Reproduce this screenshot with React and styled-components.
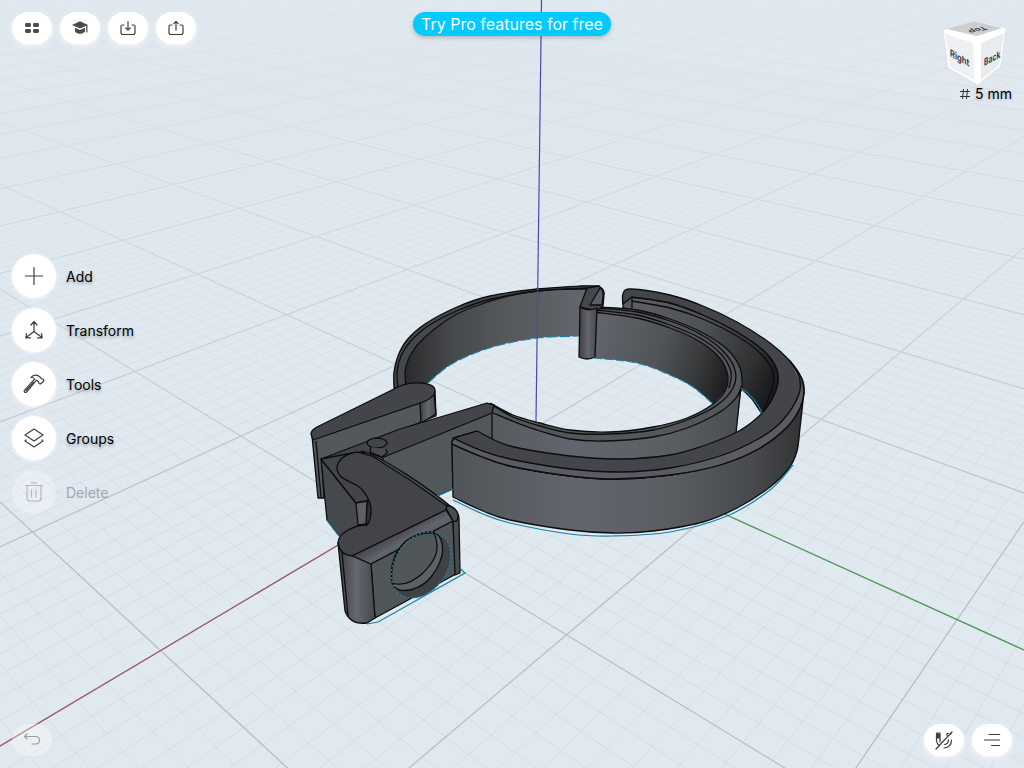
import styled, { createGlobalStyle } from "styled-components";

const tools = [
  { id: "add", label: "Add", Icon: PlusIcon },
  { id: "transform", label: "Transform", Icon: TransformIcon },
  { id: "tools", label: "Tools", Icon: HammerIcon },
  { id: "groups", label: "Groups", Icon: LayersIcon },
  { id: "delete", label: "Delete", Icon: TrashIcon, disabled: true },
];

export default function App() {
  return (
    <>
      <GlobalStyle />
      <Screen>
        <Viewport />
        <Overlay>
          <TopBar>
            <ButtonRow>
              <PillButton aria-label="Designs">
                <GridIcon />
              </PillButton>
              <PillButton aria-label="Learn">
                <CapIcon />
              </PillButton>
              <PillButton aria-label="Import">
                <ImportIcon />
              </PillButton>
              <PillButton aria-label="Export">
                <ExportIcon />
              </PillButton>
            </ButtonRow>
            <PromoButton>Try Pro features for free</PromoButton>
            <ViewInfo>
              <CubeButton aria-label="View orientation">
                <ViewCube />
              </CubeButton>
              <GridSize>
                <HashIcon />5 mm
              </GridSize>
            </ViewInfo>
          </TopBar>
          <ToolList>
            {tools.map(({ id, label, Icon, disabled }) => (
              <li key={id}>
                <ToolButton disabled={disabled}>
                  <ToolCircle $faded={disabled}>
                    <Icon />
                  </ToolCircle>
                  {label}
                </ToolButton>
              </li>
            ))}
          </ToolList>
          <BottomBar>
            <PillButton aria-label="Undo" disabled>
              <UndoIcon />
            </PillButton>
            <ButtonRow>
              <PillButton aria-label="Snapping off">
                <MagnetOffIcon />
              </PillButton>
              <PillButton aria-label="Items">
                <ItemsIcon />
              </PillButton>
            </ButtonRow>
          </BottomBar>
        </Overlay>
      </Screen>
    </>
  );
}

/* ---------- ground grid ---------- */

// perspective projection of the ground plane, one unit = one major cell
function project(u, v) {
  const w = 1 - 0.1433 * u - 0.1294 * v;
  return [
    ((535 - 210.2 * u + 87.2 * v) / w).toFixed(1),
    ((427.7 + 18.2 * u + 15.8 * v) / w).toFixed(1),
  ];
}

function gridPath(from, to, step) {
  const parts = [];
  const count = Math.round((to - from) / step);
  for (let i = 0; i <= count; i++) {
    const n = from + i * step;
    const vMax = (0.7 - 0.1433 * n) / 0.1294;
    const uMax = (0.7 - 0.1294 * n) / 0.1433;
    parts.push(`M${project(n, -60)}L${project(n, vMax)}`);
    parts.push(`M${project(-60, n)}L${project(uMax, n)}`);
  }
  return parts.join("");
}

const majorGrid = gridPath(-24, 8, 1);
const minorGrid = gridPath(-9, 7, 0.1);

/* ---------- model ---------- */

// smooth curve through the points, without the leading command
function curve(points) {
  let d = `${points[0]}`;
  for (let i = 0; i < points.length - 1; i++) {
    const p0 = points[i - 1] || points[i];
    const p1 = points[i];
    const p2 = points[i + 1];
    const p3 = points[i + 2] || p2;
    const c1 = [p1[0] + (p2[0] - p0[0]) / 6, p1[1] + (p2[1] - p0[1]) / 6];
    const c2 = [p2[0] - (p3[0] - p1[0]) / 6, p2[1] - (p3[1] - p1[1]) / 6];
    d += `C${c1} ${c2} ${p2}`;
  }
  return d;
}

const line = (points) => `M${curve(points)}`;
const band = (a, b) => `M${curve(a)}L${curve([...b].reverse())}Z`;

const cuffOuter = [[394, 388], [394, 372], [398, 356], [407, 340], [425, 324], [457, 307], [490, 296], [537, 289], [580, 286], [599, 286]];
const cuffMid = [[398, 388], [397, 372], [401, 356], [410, 342], [428, 326], [459, 310], [491, 299], [538, 291], [588, 288]];
const cuffInner = [[406, 386], [405, 372], [409, 358], [420, 342], [447, 320], [473, 307], [513, 295], [547, 290], [587, 289]];
const cuffBottom = [[428, 383], [447, 367], [470, 355], [500, 345], [537, 338], [579, 336]];

const innerTop = [[597, 307], [637, 310], [670, 319], [703, 333], [728, 350], [740, 368], [742, 386], [739, 395]];
const innerTop2 = [[597, 308], [637, 312], [670, 321], [700, 334], [723, 351], [735, 370], [733, 388], [716, 406], [687, 420], [653, 430], [610, 434], [570, 433], [540, 426], [513, 417], [491, 404]];
const innerHole = [[594, 312], [637, 318], [670, 328], [697, 340], [717, 355], [727, 372], [726, 389], [713, 404], [687, 418], [653, 427], [610, 432], [570, 430], [540, 423], [513, 415], [490, 403]];
const innerRidge = [[597, 310], [637, 315], [670, 325], [700, 338], [721, 354], [731, 372], [729, 388]];
const innerWallBottom = [[594, 358], [637, 363], [670, 375], [693, 387], [713, 404]];
const innerFrontTop = [[742, 378], [739, 390], [720, 407], [687, 422], [653, 431], [610, 436], [570, 434], [540, 427], [515, 418], [494, 408]];
const innerFrontEdge = [[741, 388], [736, 398], [720, 412], [687, 428], [653, 437], [605, 441], [570, 439], [540, 431], [520, 424], [493, 413]];

const outerRim = [[623, 304], [623, 294], [631, 289], [670, 295], [703, 306], [737, 322], [770, 343], [790, 361], [802, 379], [804, 392]];
const outerTopEdge = [[790, 361], [799, 376], [799, 394], [783, 420], [760, 438], [720, 456], [670, 468], [620, 472], [570, 469], [510, 459], [480, 450], [453, 438]];
const outerBevel = [[804, 392], [800, 408], [787, 427], [760, 448], [720, 465], [670, 475], [613, 479], [570, 476], [510, 466], [480, 456], [452, 444]];
const outerInside = [[632, 297], [670, 303], [703, 315], [737, 332], [763, 350], [776, 367], [778, 383], [770, 403], [757, 418], [737, 432], [703, 446], [670, 455], [620, 459], [570, 456], [510, 446], [477, 431]];
const outerInside2 = [[632, 301], [670, 308], [703, 319], [737, 336], [760, 353], [772, 370], [773, 386], [762, 413]];
const outerBottom = [[804, 392], [800, 428], [797, 451], [789, 468], [770, 487], [737, 508], [703, 522], [653, 531], [613, 533], [570, 530], [510, 520], [483, 511], [453, 497]];
const outerShadow = [[793, 465], [770, 490], [727, 516], [670, 532], [613, 536], [570, 534], [510, 523], [483, 514], [453, 500]];

const bodyTop =
  "M358 452C346 453 337 460 337 468C338 480 351 481 358 486C366 492 371 503 371 510C371 518 369 523 367 525C354 525 338 533 338 543C339 551 345 556 352 556L446 510L447 506L410 480L372 456Z";

function Viewport() {
  return (
    <Scene viewBox="0 0 1024 768" preserveAspectRatio="xMidYMid slice" role="img" aria-label="3D model">
      <defs>
        <linearGradient id="fade" x1="0" y1="0" x2="0" y2="1">
          <stop offset="0" stopColor="#fff" stopOpacity="0.02" />
          <stop offset="0.3" stopColor="#fff" stopOpacity="0.32" />
          <stop offset="0.75" stopColor="#fff" />
        </linearGradient>
        <mask id="distance" maskUnits="userSpaceOnUse" x="0" y="0" width="1024" height="768">
          <rect width="1024" height="768" fill="url(#fade)" />
        </mask>
        <linearGradient id="cuffWall" gradientUnits="userSpaceOnUse" x1="404" y1="0" x2="585" y2="0">
          <stop offset="0" stopColor="#292a2b" />
          <stop offset="0.25" stopColor="#45484a" />
          <stop offset="0.55" stopColor="#545859" />
          <stop offset="1" stopColor="#63666e" />
        </linearGradient>
        <linearGradient id="innerWall" gradientUnits="userSpaceOnUse" x1="597" y1="320" x2="730" y2="360">
          <stop offset="0" stopColor="#62656d" />
          <stop offset="0.5" stopColor="#505456" />
          <stop offset="0.8" stopColor="#37393a" />
          <stop offset="1" stopColor="#1f2021" />
        </linearGradient>
        <linearGradient id="outerInnerWall" gradientUnits="userSpaceOnUse" x1="625" y1="300" x2="775" y2="370">
          <stop offset="0" stopColor="#5e6268" />
          <stop offset="0.5" stopColor="#4d5153" />
          <stop offset="0.85" stopColor="#303233" />
          <stop offset="1" stopColor="#1c1d1e" />
        </linearGradient>
        <linearGradient id="frontWall" gradientUnits="userSpaceOnUse" x1="452" y1="0" x2="804" y2="0">
          <stop offset="0" stopColor="#515558" />
          <stop offset="0.35" stopColor="#62656d" />
          <stop offset="0.6" stopColor="#5b5f64" />
          <stop offset="0.85" stopColor="#484b4d" />
          <stop offset="1" stopColor="#303233" />
        </linearGradient>
        <linearGradient id="post">
          <stop offset="0" stopColor="#3c3e40" />
          <stop offset="0.5" stopColor="#64676f" />
          <stop offset="1" stopColor="#46494c" />
        </linearGradient>
        <linearGradient id="roundEdge" gradientUnits="userSpaceOnUse" x1="398" y1="532" x2="408" y2="550">
          <stop offset="0" stopColor="#45484c" />
          <stop offset="0.55" stopColor="#62656c" />
          <stop offset="1" stopColor="#54585b" />
        </linearGradient>
      </defs>

      <g mask="url(#distance)" fill="none">
        <path d={minorGrid} stroke="#bcc4cc" strokeOpacity="0.3" />
        <path d={majorGrid} stroke="#a9b0b8" strokeOpacity="0.75" strokeWidth="1.2" />
      </g>
      <path d="M0 746L345 541" stroke="#a0525a" strokeWidth="1.2" />
      <path d="M720 512L1024 650" stroke="#4c9c55" strokeWidth="1.2" />

      <Edges>
        {/* bracelet, back part */}
        <path d={band(cuffInner, cuffBottom)} fill="url(#cuffWall)" stroke="none" />
        <path d={band(cuffOuter, cuffInner)} fill="#45484b" />
        <path d={line(cuffMid)} fill="none" />

        {/* outer ring, wall facing inwards */}
        <path
          d={`M${curve(outerInside.slice(0, 8))}L762 414L752 399L741 388L735 360L700 332L655 314L623 308L623 296Z`}
          fill="url(#outerInnerWall)"
        />
        <path d={line(outerInside2)} fill="none" />

        {/* inner ring */}
        <path d={band(innerHole.slice(0, 8), innerWallBottom)} fill="url(#innerWall)" stroke="none" />
        <path
          d={`M${curve(innerFrontTop)}L492 414L488 440L530 468L640 470L736 434L742 384Z`}
          fill="url(#frontWall)"
          stroke="none"
        />
        <path
          d={`M${curve(innerTop)}L${curve(innerFrontEdge.slice(1))}L490 403L${curve([...innerHole].reverse())}Z`}
          fill="#53575a"
          stroke="none"
        />
        {[innerTop, innerTop2, innerHole, innerRidge, innerFrontEdge].map((points, i) => (
          <path key={i} d={line(points)} fill="none" />
        ))}
        <path d="M741 386L736 433" fill="none" />

        {/* hook */}
        <path d="M580 307L587 288L599 286Q605 290 604 295L603 306L597 311Z" fill="#45484b" />
        <path d="M590 305L600 288Q604 290 603 296L602 305Z" fill="#5b5f65" />
        <path d="M580 307Q588 312 597 308L595 357Q587 361 579 357Z" fill="url(#post)" />
        <path d="M623 304L624 294Q632 290 632 298L632 308" fill="#575b60" />

        {/* rear clip */}
        <path d="M312 436L318 498L324 498L322 462L436 416L435 391Q431 399 420 403L313 439Z" fill="#53585b" />
        <path d="M420 403L434 394L436 414L421 423Z" fill="url(#post)" />
        <path d="M311 434Q311 430 317 427L398 387C410 381 435 381 435 391C434 398 427 401 420 403L313 440Z" fill="#43454a" />
        <path d="M316 441L321 497" fill="none" />

        {/* middle arm */}
        <path d="M376 456L492 412L492 440L452 442L453 489L437 496L410 482Z" fill="#52575a" />
        <path d="M321 459L400 429L487 403L494 405L492 413L384 457L360 452L340 470L356 503Z" fill="#43454a" />
        <ellipse cx="377" cy="443" rx="10" ry="5" fill="#43454a" />
        <path d="M371 447L370 452L382 457L387 453L386 449" fill="#484b4f" />
        <path d="M370 453L383 458V463L370 458Z" fill="#5b5f63" />

        {/* front arm */}
        <path d="M321 459L327 520L340 537L368 530L367 500L356 503Z" fill="#45484c" />
        <path d="M362 451C382 457 428 487 455 510L447 507L370 458Z" fill="#505458" />
        <path d="M321 459L356 503L367 501L378 500L365 455L352 453Z" fill="#43454a" />
        <path d="M367 501L380 500V528L366 525Z" fill="#303233" />
        <path d="M356 503L367 501L366 524L358 525Z" fill="#5d6166" />
        <path d={bodyTop} fill="#42444a" />

        {/* front block */}
        <path d="M352 556L446 510Q454 512 457 519L371 564Z" fill="url(#roundEdge)" />
        <path d="M371 564L453 521L456 574L375 618Z" fill="#515659" />
        <path d="M447 505Q458 508 459 518L460 573L455 575L453 521L446 510Z" fill="#484b4f" />
        <path d="M338 543Q340 555 352 556L371 564L375 618L367 623Q350 625 345 611Z" fill="url(#post)" />
        <path d="M342 552L348 616" fill="none" />
        <path d="M447 510L453 521Q458 523 458 515" fill="none" />
        <ellipse cx="421" cy="565" rx="36" ry="26" transform="rotate(-55 421 565)" fill="#3f4245" stroke="none" />
        <path d="M434 532C446 539 446 558 431 577C420 590 403 594 394 587C388 574 392 553 406 541Q419 531 434 532Z" fill="#5d6166" />
        <path d="M434 533C441 549 436 560 423 573C412 583 401 586 392 583C390 570 394 553 406 541Q419 532 434 533Z" fill="#515659" />

        {/* outer ring, front */}
        <path d={band(outerBevel, outerBottom)} fill="url(#frontWall)" />
        <path d={`M${curve(outerRim)}L${curve(outerBevel)}L453 438L477 431L${curve([...outerInside].reverse())}Z`} fill="#43454a" />
        <path d={band(outerTopEdge, outerBevel)} fill="#595d63" stroke="none" />
        <path d={line(outerTopEdge)} fill="none" />
        <path d={line([...outerRim.slice(-3), ...outerBevel.slice(1)])} fill="none" />
        <path d="M452 444Q451 438 460 436L477 431" fill="none" />
      </Edges>

      <Outline>
        <path d={line(outerShadow)} />
        <path d="M453 489L437 496M327 520L340 537M367 624L378 622L465 573L461 569" />
        <path d="M741 388Q755 397 762 413" />
        <path d={line(cuffBottom)} strokeDasharray="10 3" />
        <path d={line(innerWallBottom)} strokeDasharray="8 3" />
        <ellipse cx="421" cy="565" rx="36" ry="26" transform="rotate(-55 421 565)" strokeDasharray="2 2" />
      </Outline>
      <path d="M541.5 0L536 421" stroke="#4a4aa8" strokeWidth="1.2" />
    </Scene>
  );
}

function ViewCube() {
  return (
    <svg width="72" height="74" viewBox="940 12 72 74" aria-hidden="true">
      <path d="M943 30L974 20L1006 28L1001 66L978 85L948 68Z" fill="#fff" stroke="#d3d8dd" strokeWidth="0.6" />
      <path d="M947 29L974 21L1002 28L977 36Z" fill="#cdced2" />
      <path d="M945 34L973 43L974 80L950 67Z" fill="#eff0f3" />
      <path d="M981 43L1004 33L999 65L981 80Z" fill="#e9ebef" />
      <CubeText transform="matrix(0.76 0.42 0 1 950 56)">Right</CubeText>
      <CubeText transform="matrix(0.68 -0.36 0 1 984 66)">Back</CubeText>
      <CubeText transform="matrix(-0.9 0.26 -0.6 -0.42 984 26)">Top</CubeText>
    </svg>
  );
}

/* ---------- icons ---------- */

function GridIcon() {
  return (
    <Icon $size={20} viewBox="0 0 20 20">
      <g fill="#4b4b4b" stroke="none">
        <rect x="3" y="5" width="6" height="4" rx="1.4" />
        <rect x="11" y="5" width="6" height="4" rx="1.4" />
        <rect x="3" y="11" width="6" height="4" rx="1.4" />
        <rect x="11" y="11" width="6" height="4" rx="1.4" />
      </g>
    </Icon>
  );
}

function CapIcon() {
  return (
    <Icon $size={20} viewBox="0 0 20 20">
      <path d="M2 7L10 3.2L18 7L10 10.6Z" fill="#4b4b4b" stroke="none" />
      <path d="M5 9.7L10 12L15 9.7V13.5C12.5 16.6 7.5 16.6 5 13.5Z" fill="#4b4b4b" stroke="none" />
      <path d="M16.8 7.5V14" />
    </Icon>
  );
}

function ImportIcon() {
  return (
    <Icon $size={20} viewBox="0 0 20 20">
      <path d="M6 7H4.5Q3 7 3 8.5V14.5Q3 16.5 5 16.5H15Q17 16.5 17 14.5V8.5Q17 7 15.5 7H14" />
      <path d="M10 3.5V12M7.8 10L10 12.2L12.2 10" />
    </Icon>
  );
}

function ExportIcon() {
  return (
    <Icon $size={20} viewBox="0 0 20 20">
      <path d="M6 7H4.5Q3 7 3 8.5V14.5Q3 16.5 5 16.5H15Q17 16.5 17 14.5V8.5Q17 7 15.5 7H14" />
      <path d="M10 12V3.5M7.8 5.7L10 3.5L12.2 5.7" />
    </Icon>
  );
}

function PlusIcon() {
  return (
    <Icon $size={24} viewBox="0 0 24 24">
      <path d="M12 3.5V20.5M3.5 12H20.5" />
    </Icon>
  );
}

function TransformIcon() {
  return (
    <Icon $size={24} viewBox="0 0 24 24">
      <path d="M12 13.5V3.5M9 7L12 3.5L15 7M12 13.5L4 19.5M12 13.5L20 19.5M4.5 15.5L3.8 19.8H8.5M19.5 15.5L20.2 19.8H15.5" />
    </Icon>
  );
}

function HammerIcon() {
  return (
    <Icon $size={24} viewBox="0 0 24 24">
      <path d="M9 5.5C11.5 2.5 15.5 2.5 18 5L19.5 6.8L21.2 7L21.8 9L18.5 12L16.8 11.5L16.6 9.8L14.5 8.2L4.8 19.8Q3.5 21 2.5 20Q1.6 19 2.8 17.8L12.8 7Q11.5 5.3 9 5.5Z" />
      <path d="M4 18.5L11.5 10.5" />
    </Icon>
  );
}

function LayersIcon() {
  return (
    <Icon $size={24} viewBox="0 0 24 24">
      <path d="M12 3L21 9L12 15L3 9Z" />
      <path d="M4 14L3 15L12 21L21 15L20 14" />
    </Icon>
  );
}

function TrashIcon() {
  return (
    <Icon $size={24} viewBox="0 0 24 24">
      <path d="M3.5 5.5H20.5M9.5 2.8H14.5M5 6V18.5Q5 21 7.5 21H16.5Q19 21 19 18.5V6M9.5 10V17M14 10V17" />
    </Icon>
  );
}

function UndoIcon() {
  return (
    <Icon $size={20} viewBox="0 0 20 20">
      <path d="M5 4L2.5 6.5L5 9M2.5 6.5H13Q17.5 6.5 17.5 10.5Q17.5 14 13.5 14H10" />
    </Icon>
  );
}

function MagnetOffIcon() {
  return (
    <Icon $size={20} viewBox="0 0 20 20">
      <path d="M2.5 3H6V12M2.5 3V11Q3 14 5 15.5M10 18Q17.5 17.5 17.5 10M10.5 14.5Q14.5 14 14.5 9.5M13 5.5V3.5H14.5M17 3V4" />
      <path d="M3 4H5.5V8H3Z" fill="#4b4b4b" />
      <path d="M18 2L2 19" />
    </Icon>
  );
}

function ItemsIcon() {
  return (
    <Icon $size={20} viewBox="0 0 20 20">
      <path d="M7 4.5H17.5M2.5 10H17.5M9.5 15.5H17.5" />
    </Icon>
  );
}

function HashIcon() {
  return (
    <svg width="12" height="12" viewBox="0 0 12 12" fill="none" stroke="#333" aria-hidden="true">
      <path d="M4.5 1L3.5 11M8.5 1L7.500 11M1 3.5H11M1 8.5H11" />
    </svg>
  );
}

/* ---------- styles ---------- */

const GlobalStyle = createGlobalStyle`
  body {
    margin: 0;
    background: #e0e8f0;
    font-family: Inter, "Liberation Sans", sans-serif;
    color: #000;
  }

  button {
    border: 0;
    padding: 0;
    background: none;
    font: inherit;
    color: inherit;
    cursor: pointer;
  }
`;

const Screen = styled.main`
  display: grid;
  grid-template: minmax(0, 1fr) / minmax(0, 1fr);
  height: 100vh;
  overflow: hidden;

  > * {
    grid-area: 1 / 1;
  }
`;

const Scene = styled.svg`
  display: block;
  width: 100%;
  height: 100%;
`;

const Edges = styled.g`
  stroke: #0c0d0e;
  stroke-width: 1.3;
  stroke-linejoin: round;
`;

const Outline = styled.g`
  fill: none;
  stroke: #1583a8;
  stroke-width: 1.2;
`;

const Overlay = styled.div`
  z-index: 1;
  display: grid;
  grid-template-rows: 1fr auto 1fr;
  padding: 12px;
`;

const TopBar = styled.header`
  display: grid;
  grid-template-columns: 1fr auto 1fr;
  align-items: start;
`;

const ButtonRow = styled.div`
  display: flex;
  gap: 8px;
`;

const PillButton = styled.button`
  display: flex;
  align-items: center;
  justify-content: center;
  width: 40px;
  height: 32px;
  border-radius: 16px;
  background: #fff;
  box-shadow: 0 2px 6px rgba(255, 255, 255, 0.9), 0 2px 4px rgba(60, 80, 110, 0.06);

  &:disabled {
    background: rgba(255, 255, 255, 0.35);
    box-shadow: none;

    svg {
      opacity: 0.45;
    }
  }
`;

const PromoButton = styled.button`
  height: 24px;
  padding: 0 8px;
  border-radius: 12px;
  background: #00caff;
  box-shadow: 0 2px 4px rgba(0, 0, 0, 0.2);
  color: #fff;
  font-size: 16px;
  line-height: 24px;
`;

const ViewInfo = styled.div`
  display: flex;
  flex-direction: column;
  align-items: flex-end;
`;

const CubeButton = styled.button`
  display: flex;
`;

const CubeText = styled.text`
  fill: #3c434c;
  font-size: 10px;
  font-weight: 700;
`;

const GridSize = styled.span`
  display: flex;
  align-items: center;
  gap: 4px;
  font-size: 14px;
  line-height: 16px;
  text-shadow: 0 1px 3px rgba(0, 0, 0, 0.25);
`;

const ToolList = styled.ul`
  display: flex;
  flex-direction: column;
  align-items: flex-start;
  gap: 10px;
  margin: 0;
  padding: 0;
  list-style: none;
`;

const ToolButton = styled.button`
  display: flex;
  align-items: center;
  gap: 10px;
  font-size: 14px;
  text-shadow: 0 2px 3px rgba(0, 0, 0, 0.3);

  &:disabled {
    color: #a2a7ae;
    text-shadow: none;
  }
`;

const ToolCircle = styled.span`
  display: flex;
  align-items: center;
  justify-content: center;
  width: 44px;
  height: 44px;
  border-radius: 50%;
  background: ${({ $faded }) => ($faded ? "rgba(255, 255, 255, 0.3)" : "#fff")};
  box-shadow: ${({ $faded }) => ($faded ? "none" : "0 1px 4px rgba(255, 255, 255, 0.8)")};

  svg {
    opacity: ${({ $faded }) => ($faded ? 0.3 : 1)};
  }
`;

const BottomBar = styled.footer`
  display: flex;
  align-items: flex-end;
  justify-content: space-between;
`;

const Icon = styled.svg.attrs({ "aria-hidden": true })`
  width: ${({ $size }) => $size}px;
  height: ${({ $size }) => $size}px;
  fill: none;
  stroke: #3f3f3f;
  stroke-width: 1.2;
  stroke-linecap: round;
  stroke-linejoin: round;
`;
